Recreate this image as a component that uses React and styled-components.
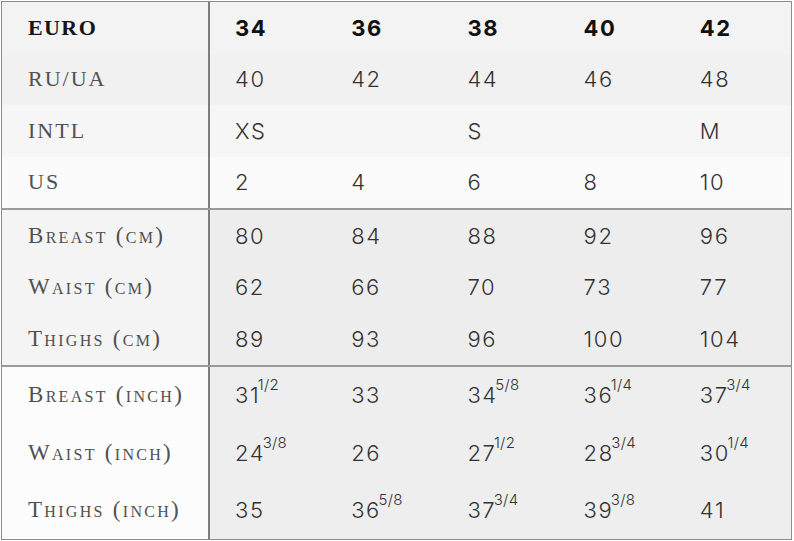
import styled, { createGlobalStyle } from "styled-components";

const GlobalStyle = createGlobalStyle`
    html, body {
        margin: 0;
        padding: 0;
        background: #ffffff;
    }
`

const Page = styled.div`
    padding: 1px 0 0 1px;
`

const Table = styled.div`
    width: 789px;
    border: 1px solid #8c8c8c;
    display: flex;
    flex-direction: column;
`

const Section = styled.div`
    display: grid;
    grid-template-columns: 208px repeat(5, 1fr);
    grid-auto-rows: ${p => p.rowHeight}px;
    border-bottom: ${p => (p.last ? "none" : "2px solid #9a9a9a")};
`

const Label = styled.div`
    display: flex;
    align-items: center;
    padding-left: 26px;
    border-right: 2px solid #7d7d7d;
    background: ${p => p.bg};
    font-family: "Liberation Serif", "DejaVu Serif", serif;
    font-size: ${p => (p.caps ? "23px" : "22px")};
    letter-spacing: ${p => (p.caps ? "2.3px" : p.head ? "1.4px" : "2px")};
    font-variant: ${p => (p.caps ? "small-caps" : "normal")};
    font-weight: ${p => (p.head ? 700 : 400)};
    color: ${p => (p.head ? "#151515" : "#505050")};
`

const Value = styled.div`
    display: flex;
    align-items: center;
    padding-left: 25px;
    background: ${p => p.bg};
    font-family: "Inter", "Liberation Sans", sans-serif;
    font-size: 22px;
    letter-spacing: 1.6px;
    font-weight: ${p => (p.head ? 700 : 300)};
    color: ${p => (p.head ? "#111111" : "#333333")};
`

const Num = styled.span`
    display: inline-flex;
    align-items: flex-start;
`

const Frac = styled.span`
    font-size: 15px;
    letter-spacing: 0.3px;
    margin-top: -7px;
    margin-left: -2.5px;
`

const sizes = [
    { label: "EURO", head: true, bg: "#f3f3f3", values: ["34", "36", "38", "40", "42"] },
    { label: "RU/UA", bg: "#f1f1f1", values: ["40", "42", "44", "46", "48"] },
    { label: "INTL", bg: "#f6f6f6", values: ["XS", "", "S", "", "M"] },
    { label: "US", bg: "#fbfbfb", values: ["2", "4", "6", "8", "10"] },
]

const cm = [
    { label: "Breast (cm)", values: ["80", "84", "88", "92", "96"] },
    { label: "Waist (cm)", values: ["62", "66", "70", "73", "77"] },
    { label: "Thighs (cm)", values: ["89", "93", "96", "100", "104"] },
]

const inch = [
    { label: "Breast (inch)", values: [["31", "1/2"], ["33"], ["34", "5/8"], ["36", "1/4"], ["37", "3/4"]] },
    { label: "Waist (inch)", values: [["24", "3/8"], ["26"], ["27", "1/2"], ["28", "3/4"], ["30", "1/4"]] },
    { label: "Thighs (inch)", values: [["35"], ["36", "5/8"], ["37", "3/4"], ["39", "3/8"], ["41"]] },
]

export default function App() {
    return (
        <Page>
            <GlobalStyle />
            <Table>
                <Section rowHeight={51.5}>
                    {sizes.map(row => [
                        <Label key={row.label} bg={row.bg} head={row.head}>{row.label}</Label>,
                        ...row.values.map((v, i) => (
                            <Value key={row.label + i} bg={row.bg} head={row.head}>{v}</Value>
                        )),
                    ])}
                </Section>
                <Section rowHeight={51.5}>
                    {cm.map(row => [
                        <Label key={row.label} bg="#f4f4f4" caps>{row.label}</Label>,
                        ...row.values.map((v, i) => (
                            <Value key={row.label + i} bg="#ededed">{v}</Value>
                        )),
                    ])}
                </Section>
                <Section rowHeight={57.5} last>
                    {inch.map(row => [
                        <Label key={row.label} bg="#fcfcfc" caps>{row.label}</Label>,
                        ...row.values.map(([whole, frac], i) => (
                            <Value key={row.label + i} bg="#eeeeee">
                                <Num>
                                    {whole}
                                    {frac && <Frac>{frac}</Frac>}
                                </Num>
                            </Value>
                        )),
                    ])}
                </Section>
            </Table>
        </Page>
    )
}
